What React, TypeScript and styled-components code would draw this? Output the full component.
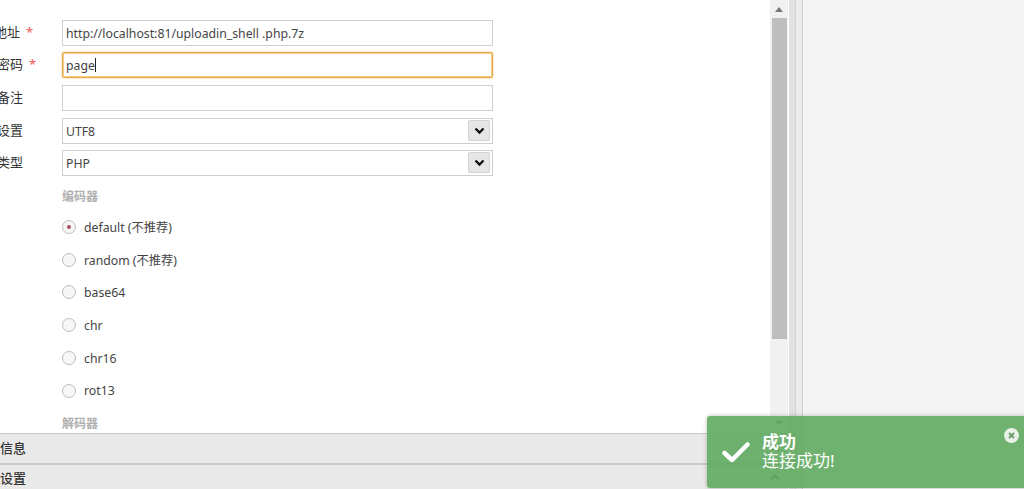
import React from 'react';
import styled, { createGlobalStyle } from 'styled-components';

const cjk = `"Noto Sans", "Noto Sans CJK SC", sans-serif`;

const GlobalStyle = createGlobalStyle`
  html, body {
    margin: 0;
    padding: 0;
    height: 100%;
    overflow: hidden;
    background: #fff;
  }
  #root { height: 100%; }
  * { box-sizing: border-box; }
`;

const Page = styled.div`
  position: relative;
  display: flex;
  width: 1024px;
  height: 489px;
  overflow: hidden;
  font-family: ${cjk};
  font-size: 12px;
  color: #333;
`;

const Main = styled.div`
  width: 788px;
  display: flex;
  flex-direction: column;
  flex: none;
`;

const Content = styled.div`
  height: 433px;
  display: flex;
  flex: none;
`;

const FormArea = styled.div`
  flex: 1;
  height: 433px;
  overflow: hidden;
  padding-top: 20px;
`;

const FormRow = styled.div<{ $gap: number }>`
  display: flex;
  align-items: center;
  height: 26px;
  margin-bottom: ${p => p.$gap}px;
`;

const Label = styled.div<{ $shift?: number }>`
  width: 62px;
  flex: none;
  margin-left: ${p => -(p.$shift ?? 3)}px;
  margin-right: ${p => p.$shift ?? 3}px;
  padding-bottom: 3px;
  font-size: 13px;
  white-space: nowrap;
  color: #333;
`;

const Star = styled.span`
  color: #f25555;
  margin-left: 6px;
  font-size: 13px;
`;

const TextBox = styled.div<{ $focus?: boolean }>`
  position: relative;
  display: flex;
  align-items: center;
  width: 431px;
  height: 26px;
  padding-left: 3px;
  font-size: 12.25px;
  color: #444;
  background: #fff;
  border: 1px solid ${p => (p.$focus ? '#e8aa45' : '#cfcfcf')};
  border-radius: ${p => (p.$focus ? '2px' : '0')};
  box-shadow: ${p => (p.$focus ? 'inset 0 0 0 1px #f3cd8c, 0 0 2px #f0c070' : 'none')};
`;

const Caret = styled.span`
  display: inline-block;
  width: 1px;
  height: 14px;
  background: #222;
`;

const SelectBtn = styled.span`
  position: absolute;
  right: 2px;
  top: 1px;
  width: 22px;
  height: 21px;
  display: flex;
  align-items: center;
  justify-content: center;
  background: #e6e6e6;
  border: 1px solid #d3d3d3;
  border-radius: 2px;
`;

const GroupTitle = styled.div<{ $top: number }>`
  margin: ${p => p.$top}px 0 0 62px;
  height: 16px;
  line-height: 16px;
  font-size: 12px;
  font-weight: bold;
  color: #b0b0b0;
`;

const RadioList = styled.div`
  display: flex;
  flex-direction: column;
  margin: 14.4px 0 0 62px;
  gap: 17.8px;
`;

const RadioRow = styled.div`
  display: flex;
  align-items: center;
  height: 15px;
  gap: 8px;
  font-size: 12.25px;
  color: #444;
`;

const RadioDot = styled.span<{ $on?: boolean }>`
  width: 14px;
  height: 14px;
  flex: none;
  display: flex;
  align-items: center;
  justify-content: center;
  border-radius: 50%;
  border: 1px solid #bdbdbd;
  background: #f7f7f7;
  &::after {
    content: '';
    display: ${p => (p.$on ? 'block' : 'none')};
    width: 4px;
    height: 4px;
    border-radius: 50%;
    background: #a0545c;
  }
`;

const Scrollbar = styled.div`
  position: relative;
  width: 18px;
  height: 433px;
  flex: none;
  background: #f1f1f1;
  display: flex;
  flex-direction: column;
  align-items: center;
`;

const ScrollThumb = styled.div`
  width: 15px;
  height: 321px;
  margin-top: 18px;
  background: #bebebe;
`;

const ScrollArrow = styled.span<{ $down?: boolean }>`
  position: absolute;
  ${p => (p.$down ? 'bottom: 8px;' : 'top: 7px;')}
  width: 0;
  height: 0;
  border-left: 4px solid transparent;
  border-right: 4px solid transparent;
  ${p => (p.$down ? 'border-top: 4px solid #777;' : 'border-bottom: 5px solid #777;')}
`;

const Bar = styled.div<{ $h: number; $line: number }>`
  height: ${p => p.$h}px;
  flex: none;
  display: flex;
  align-items: center;
  justify-content: space-between;
  padding-right: 8px;
  font-size: 13px;
  font-weight: 500;
  color: #333;
  background: #e9e9e9;
  border-top: ${p => p.$line}px solid #c8c8c8;
`;

const BarTitle = styled.span`
  position: relative;
  top: -1px;
`;

const Splitter = styled.div`
  width: 15px;
  flex: none;
  display: flex;
  background: #fff;
`;

const SplitLine = styled.div<{ $w: number; $bg: string }>`
  width: ${p => p.$w}px;
  background: ${p => p.$bg};
`;

const SidePanel = styled.div`
  flex: 1;
  background: #f4f4f4;
`;

const Toast = styled.div`
  position: absolute;
  left: 707px;
  top: 416px;
  width: 320px;
  height: 72px;
  display: flex;
  align-items: center;
  padding-left: 15px;
  gap: 12px;
  border-radius: 3px 0 0 3px;
  background: rgba(92, 168, 92, 0.88);
  box-shadow: 0 0 4px rgba(0, 0, 0, 0.25);
  color: #fff;
`;

const ToastText = styled.div`
  font-size: 17px;
  line-height: 19px;
  padding-bottom: 3px;
`;

const ToastTitle = styled.div`
  font-weight: bold;
`;

const ToastClose = styled.span`
  position: absolute;
  left: 297px;
  top: 12px;
  width: 15px;
  height: 15px;
  border-radius: 50%;
  background: #e9f1e9;
  display: flex;
  align-items: center;
  justify-content: center;
`;

const Chevron = () => (
  <svg width="11" height="8" viewBox="0 0 11 8">
    <path d="M1.5 1.5 L5.5 5.5 L9.5 1.5" fill="none" stroke="#111" strokeWidth="2.4" />
  </svg>
);

const BarChevron = () => (
  <svg width="10" height="7" viewBox="0 0 10 7">
    <path d="M1 5.5 L5 1.5 L9 5.5" fill="none" stroke="#666" strokeWidth="2" />
  </svg>
);

const encoders = [
  { name: 'default (不推荐)', on: true },
  { name: 'random (不推荐)' },
  { name: 'base64' },
  { name: 'chr' },
  { name: 'chr16' },
  { name: 'rot13' },
];

export default function App() {
  return (
    <Page>
      <GlobalStyle />
      <Main>
        <Content>
          <FormArea>
            <FormRow $gap={6}>
              <Label $shift={6}>地址<Star>*</Star></Label>
              <TextBox>http://localhost:81/uploadin_shell .php.7z</TextBox>
            </FormRow>
            <FormRow $gap={7}>
              <Label>密码<Star>*</Star></Label>
              <TextBox $focus>page<Caret /></TextBox>
            </FormRow>
            <FormRow $gap={7}>
              <Label>备注</Label>
              <TextBox />
            </FormRow>
            <FormRow $gap={6}>
              <Label>设置</Label>
              <TextBox>UTF8<SelectBtn><Chevron /></SelectBtn></TextBox>
            </FormRow>
            <FormRow $gap={0}>
              <Label>类型</Label>
              <TextBox>PHP<SelectBtn><Chevron /></SelectBtn></TextBox>
            </FormRow>
            <GroupTitle $top={13}>编码器</GroupTitle>
            <RadioList>
              {encoders.map(e => (
                <RadioRow key={e.name}>
                  <RadioDot $on={e.on} />
                  {e.name}
                </RadioRow>
              ))}
            </RadioList>
            <GroupTitle $top={18}>解码器</GroupTitle>
          </FormArea>
          <Scrollbar>
            <ScrollArrow />
            <ScrollThumb />
            <ScrollArrow $down />
          </Scrollbar>
        </Content>
        <Bar $h={30} $line={1}><BarTitle>信息</BarTitle><BarChevron /></Bar>
        <Bar $h={26} $line={2}>设置<BarChevron /></Bar>
      </Main>
      <Splitter>
        <SplitLine $w={1} $bg="#fff" />
        <SplitLine $w={6} $bg="#e2e2e2" />
        <SplitLine $w={1} $bg="#d4d4d4" />
        <SplitLine $w={6} $bg="#ebebeb" />
        <SplitLine $w={1} $bg="#d0d0d0" />
      </Splitter>
      <SidePanel />
      <Toast>
        <svg width="28" height="22" viewBox="0 0 28 22">
          <path d="M2.5 12 L10 19 L25.5 3.5" fill="none" stroke="#fff" strokeWidth="4.5" strokeLinecap="round" strokeLinejoin="round" />
        </svg>
        <ToastText>
          <ToastTitle>成功</ToastTitle>
          连接成功!
        </ToastText>
        <ToastClose>
          <svg width="7" height="7" viewBox="0 0 7 7">
            <path d="M1 1 L6 6 M6 1 L1 6" stroke="#6a9a6a" strokeWidth="1.8" />
          </svg>
        </ToastClose>
      </Toast>
    </Page>
  );
}
